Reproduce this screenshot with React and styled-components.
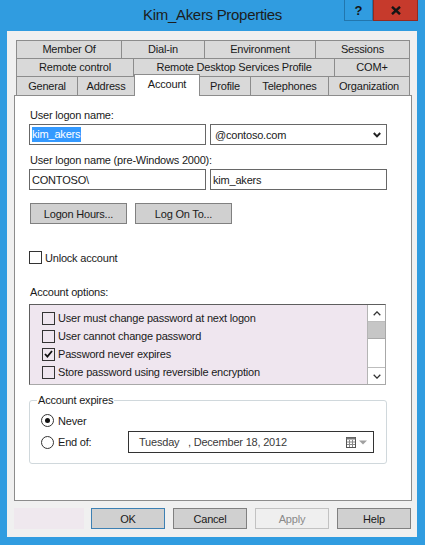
import React from "react";
import styled, { createGlobalStyle } from "styled-components";

const GlobalStyle = createGlobalStyle`
  html, body { margin: 0; padding: 0; background: #ffffff; }
  body {
    font-family: "Liberation Sans", Arial, sans-serif;
    font-size: 11px;
    letter-spacing: -0.2px;
    color: #1a1a1a;
  }
  * { box-sizing: border-box; }
`;

const Window = styled.div`
  width: 425px;
  height: 545px;
  background: #309ce0;
  display: flex;
  flex-direction: column;
`;

const TitleBar = styled.div`
  height: 31px;
  flex: none;
  display: grid;
  grid-template-columns: 1fr auto 1fr;
`;

const Title = styled.div`
  grid-column: 2;
  align-self: center;
  margin-bottom: 2px;
  font-size: 15px;
  line-height: 18px;
  letter-spacing: -0.3px;
  color: #1c1c1c;
`;

const CaptionButtons = styled.div`
  grid-column: 3;
  justify-self: end;
  align-self: start;
  margin-right: 7px;
  display: flex;
`;

const CaptionButton = styled.div`
  width: ${(p) => p.$w}px;
  height: 21px;
  display: flex;
  align-items: center;
  justify-content: center;
  background: ${(p) => (p.$close ? "#c63a2c" : "#309ce0")};
  border: 1px solid ${(p) => (p.$close ? "#94291f" : "#2276ad")};
  border-top: none;
  font-weight: bold;
  font-size: 13px;
  color: #151515;
  letter-spacing: 0;
`;

const Client = styled.div`
  margin: 0 8px 0 7px;
  height: 506px;
  background: #f0f0f0;
  padding: 9px 5px 8px 7px;
  display: flex;
  flex-direction: column;
`;

const TabStrip = styled.div`
  margin: 0 2px;
  display: flex;
  flex-direction: column;
`;

const TabRow = styled.div`
  display: flex;
  align-items: flex-start;
  height: ${(p) => p.$h}px;
`;

const Tab = styled.div`
  position: relative;
  flex: none;
  width: ${(p) => p.$w}px;
  height: ${(p) => (p.$selected ? p.$h + 3 : p.$h)}px;
  margin-top: ${(p) => (p.$selected ? -2 : 0)}px;
  margin-left: -1px;
  &:first-child { margin-left: 0; }
  border: 1px solid #8c8c8c;
  border-bottom: none;
  background: ${(p) => (p.$selected ? "#ffffff" : "#d9d9d9")};
  z-index: ${(p) => (p.$selected ? 2 : 0)};
  text-align: center;
  line-height: ${(p) => (p.$selected ? 18 : p.$h - 1)}px;
  color: #1a1a1a;
  white-space: nowrap;
`;

const Panel = styled.div`
  position: relative;
  z-index: 1;
  height: 406px;
  background: #ffffff;
  border: 1px solid #8c8c8c;
  padding: 13px 14px 0 14px;
  display: flex;
  flex-direction: column;
`;

const FieldLabel = styled.div`
  line-height: 13px;
  padding-left: 1px;
  margin-top: ${(p) => p.$mt || 0}px;
`;

const FieldPair = styled.div`
  display: grid;
  grid-template-columns: 177px 177px;
  column-gap: 4px;
  margin-top: 2px;
`;

const TextBox = styled.div`
  height: 21px;
  border: 1px solid #676767;
  background: #ffffff;
  padding-left: ${(p) => p.$pl || 2}px;
  padding-right: 5px;
  display: flex;
  align-items: center;
  white-space: nowrap;
`;

const Selection = styled.span`
  background: #3399ff;
  color: #ffffff;
  line-height: 15px;
  padding: 0 1px 0 0;
`;

const DropArrow = styled.svg`
  margin-left: auto;
`;

const ButtonRow = styled.div`
  display: flex;
  gap: 8px;
  margin-top: 13px;
  padding-left: 1px;
`;

const PushButton = styled.div`
  flex: none;
  width: ${(p) => p.$w}px;
  height: 21px;
  display: flex;
  align-items: center;
  justify-content: center;
  background: ${(p) => (p.$disabled ? "#efefef" : "#d0d0d0")};
  border: 1px solid
    ${(p) => (p.$default ? "#3d80b3" : p.$disabled ? "#c2c2c2" : "#808080")};
  color: ${(p) => (p.$disabled ? "#8a8a8a" : "#1a1a1a")};
`;

const CheckRow = styled.div`
  display: flex;
  align-items: center;
  gap: 3px;
  height: ${(p) => p.$h}px;
  margin-top: ${(p) => p.$mt || 0}px;
  white-space: nowrap;
`;

const CheckBox = styled.div`
  flex: none;
  width: 13px;
  height: 13px;
  border: 1px solid #333333;
  background: ${(p) => p.$bg || "#ffffff"};
  display: flex;
  align-items: center;
  justify-content: center;
`;

const ListBox = styled.div`
  margin-top: 5px;
  width: 357px;
  height: 81px;
  border: 1px solid;
  border-color: #5e5e5e #a8a8a8 #a8a8a8 #5e5e5e;
  background: #efe6ef;
  display: grid;
  grid-template-columns: 1fr 18px;
`;

const ListItems = styled.div`
  padding: 4px 0 0 12px;
  display: flex;
  flex-direction: column;
  overflow: hidden;
`;

const ScrollBar = styled.div`
  background: #ffffff;
  border-left: 1px solid #b4b4b4;
  display: flex;
  flex-direction: column;
`;

const ScrollArrow = styled.div`
  height: 17px;
  flex: none;
  display: flex;
  align-items: center;
  justify-content: center;
  border-${(p) => (p.$down ? "top" : "bottom")}: 1px solid #bdbdbd;
`;

const ScrollThumb = styled.div`
  height: 17px;
  flex: none;
  background: #c6c6c6;
  border-bottom: 1px solid #a9a9a9;
`;

const ScrollTrack = styled.div`
  flex: 1;
`;

const GroupBox = styled.fieldset`
  margin: 9px 0 0 0;
  width: 358px;
  border: 1px solid #d0d8dc;
  border-radius: 3px;
  padding: 3px 0 10px 11px;
  min-width: 0;
`;

const Legend = styled.legend`
  padding: 0 1px;
  margin-left: -4px;
  line-height: 13px;
`;

const RadioRow = styled.div`
  display: flex;
  align-items: center;
  height: ${(p) => p.$h}px;
  white-space: nowrap;
`;

const Radio = styled.div`
  flex: none;
  width: 13px;
  height: 13px;
  border-radius: 50%;
  border: 1px solid #333333;
  background: #ffffff;
  display: flex;
  align-items: center;
  justify-content: center;
`;

const RadioDot = styled.div`
  width: 5px;
  height: 5px;
  border-radius: 50%;
  background: #111111;
`;

const RadioLabel = styled.div`
  flex: none;
  margin-left: 4px;
  width: ${(p) => (p.$w ? `${p.$w}px` : "auto")};
`;

const DatePicker = styled.div`
  flex: none;
  width: 246px;
  height: 22px;
  border: 1px solid #333333;
  background: #ffffff;
  display: flex;
  align-items: center;
  padding: 0 6px 0 10px;
  color: #3a3a3a;
  white-space: pre;
`;

const PickerIcons = styled.div`
  margin-left: auto;
  display: flex;
  align-items: center;
  gap: 3px;
`;

const BottomBar = styled.div`
  margin-top: 7px;
  height: 21px;
  display: flex;
  padding-right: 1px;
`;

const StatusArea = styled.div`
  width: 70px;
  height: 21px;
  background: #efe8ee;
  margin-right: auto;
`;

const DialogButtons = styled.div`
  display: flex;
  gap: 8px;
`;

const tabRows = [
  {
    h: 18,
    tabs: [
      ["Member Of", 106],
      ["Dial-in", 84],
      ["Environment", 112],
      ["Sessions", 95],
    ],
  },
  {
    h: 18,
    tabs: [
      ["Remote control", 118],
      ["Remote Desktop Services Profile", 202],
      ["COM+", 76],
    ],
  },
  {
    h: 19,
    tabs: [
      ["General", 62],
      ["Address", 58],
      ["Account", 66, true],
      ["Profile", 52],
      ["Telephones", 79],
      ["Organization", 82],
    ],
  },
];

const options = [
  ["User must change password at next logon", false],
  ["User cannot change password", false],
  ["Password never expires", true],
  ["Store password using reversible encryption", false],
];

const CheckMark = () => (
  <svg width="9" height="8" viewBox="0 0 9 8">
    <path d="M1 4 L3.4 6.6 L8 1" fill="none" stroke="#111" strokeWidth="1.8" />
  </svg>
);

const Chevron = ({ up, color = "#333", w = 8, h = 5, sw = 1.3 }) => (
  <svg width={w} height={h} viewBox={`0 0 ${w} ${h}`}>
    <path
      d={up ? `M0.7 ${h - 0.7} L${w / 2} 0.9 L${w - 0.7} ${h - 0.7}` : `M0.7 0.7 L${w / 2} ${h - 0.9} L${w - 0.7} 0.7`}
      fill="none"
      stroke={color}
      strokeWidth={sw}
    />
  </svg>
);

const CalendarIcon = () => (
  <svg width="10" height="11" viewBox="0 0 10 11">
    <rect x="0.5" y="0.5" width="9" height="10" fill="#fff" stroke="#555" />
    <rect x="0.5" y="0.5" width="9" height="2" fill="#777" />
    <path d="M3.5 3 V10 M6.5 3 V10 M1 5 H9 M1 7.5 H9" stroke="#8a8a8a" strokeWidth="1" />
  </svg>
);

export default function App() {
  return (
    <>
      <GlobalStyle />
      <Window>
        <TitleBar>
          <Title>Kim_Akers Properties</Title>
          <CaptionButtons>
            <CaptionButton $w={29}>?</CaptionButton>
            <CaptionButton $w={45} $close>
              <svg width="10" height="9" viewBox="0 0 10 9">
                <path d="M1 0.8 L9 8.2 M9 0.8 L1 8.2" stroke="#151515" strokeWidth="2.4" />
              </svg>
            </CaptionButton>
          </CaptionButtons>
        </TitleBar>
        <Client>
          <TabStrip>
            {tabRows.map((row, i) => (
              <TabRow key={i} $h={row.h}>
                {row.tabs.map(([label, w, sel]) => (
                  <Tab key={label} $w={w} $h={row.h} $selected={sel}>
                    {label}
                  </Tab>
                ))}
              </TabRow>
            ))}
          </TabStrip>
          <Panel>
            <FieldLabel>User logon name:</FieldLabel>
            <FieldPair>
              <TextBox>
                <Selection>kim_akers</Selection>
              </TextBox>
              <TextBox $pl={4}>
                @contoso.com
                <DropArrow width="8" height="6" viewBox="0 0 8 6">
                  <path d="M0.8 1 L4 4.4 L7.2 1" fill="none" stroke="#222" strokeWidth="2" />
                </DropArrow>
              </TextBox>
            </FieldPair>
            <FieldLabel $mt={9}>User logon name (pre-Windows 2000):</FieldLabel>
            <FieldPair>
              <TextBox>CONTOSO\</TextBox>
              <TextBox>kim_akers</TextBox>
            </FieldPair>
            <ButtonRow>
              <PushButton $w={97}>Logon Hours...</PushButton>
              <PushButton $w={97}>Log On To...</PushButton>
            </ButtonRow>
            <CheckRow $h={13} $mt={27}>
              <CheckBox />
              Unlock account
            </CheckRow>
            <FieldLabel $mt={22}>Account options:</FieldLabel>
            <ListBox>
              <ListItems>
                {options.map(([label, checked]) => (
                  <CheckRow key={label} $h={18}>
                    <CheckBox $bg="transparent">{checked && <CheckMark />}</CheckBox>
                    {label}
                  </CheckRow>
                ))}
              </ListItems>
              <ScrollBar>
                <ScrollArrow>
                  <Chevron up />
                </ScrollArrow>
                <ScrollThumb />
                <ScrollTrack />
                <ScrollArrow $down>
                  <Chevron />
                </ScrollArrow>
              </ScrollBar>
            </ListBox>
            <GroupBox>
              <Legend>Account expires</Legend>
              <RadioRow $h={21}>
                <Radio>
                  <RadioDot />
                </Radio>
                <RadioLabel>Never</RadioLabel>
              </RadioRow>
              <RadioRow $h={22}>
                <Radio />
                <RadioLabel $w={70}>End of:</RadioLabel>
                <DatePicker>
                  {"Tuesday   , December 18, 2012"}
                  <PickerIcons>
                    <CalendarIcon />
                    <svg width="8" height="5" viewBox="0 0 8 5">
                      <path d="M0 0.5 H8 L4 4.5 Z" fill="#a0a0a0" />
                    </svg>
                  </PickerIcons>
                </DatePicker>
              </RadioRow>
            </GroupBox>
          </Panel>
          <BottomBar>
            <StatusArea />
            <DialogButtons>
              <PushButton $w={74} $default>OK</PushButton>
              <PushButton $w={74}>Cancel</PushButton>
              <PushButton $w={74} $disabled>Apply</PushButton>
              <PushButton $w={74}>Help</PushButton>
            </DialogButtons>
          </BottomBar>
        </Client>
      </Window>
    </>
  );
}
